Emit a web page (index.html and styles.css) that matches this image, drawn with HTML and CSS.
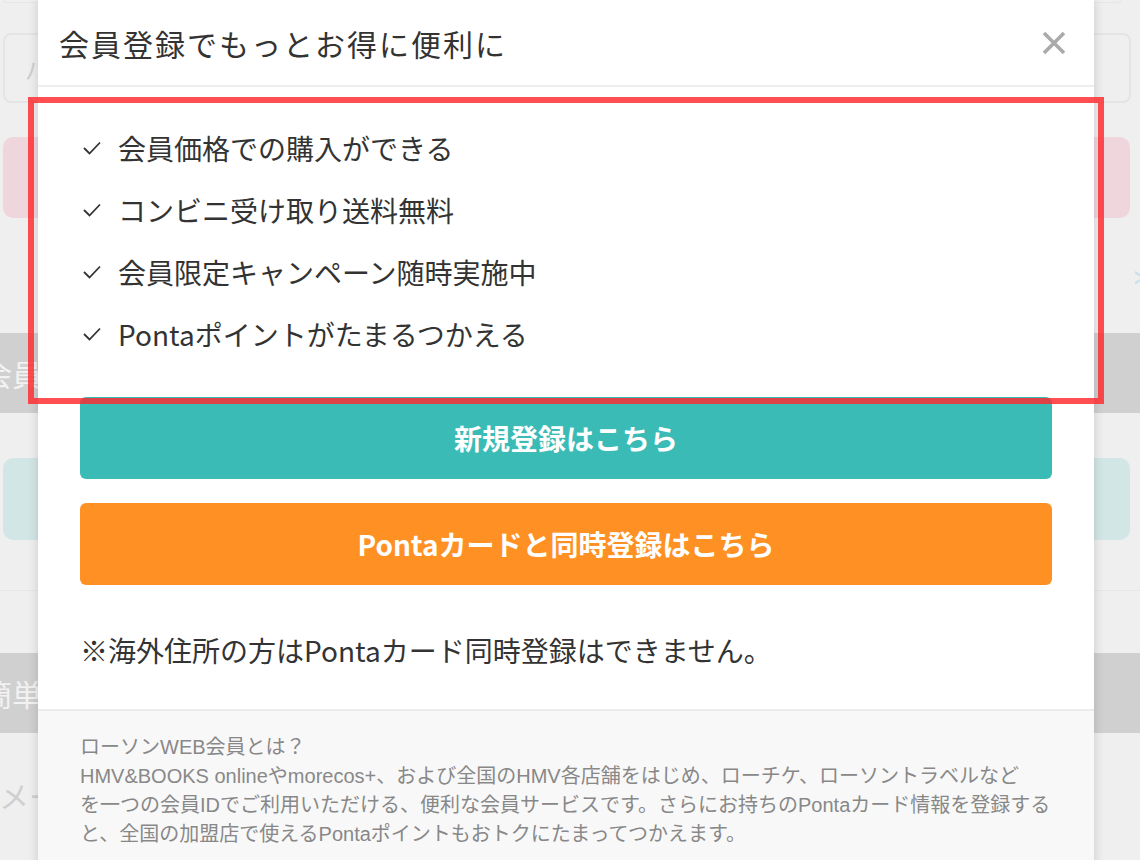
FILE: index.html
```html
<!DOCTYPE html>
<html lang="ja">
<head>
    <meta charset="UTF-8">
    <meta name="viewport" content="width=device-width, initial-scale=1.0">
    <title>会員登録</title>
    <link rel="stylesheet" href="styles.css">
</head>
<body>
    <div class="page">
        <div class="page-top"></div>
        <div class="field"><span class="placeholder">パスワード</span></div>
        <div class="alert-box"></div>
        <div class="link-row"><span class="chevron">&gt;</span></div>
        <div class="band">会員情報の入力</div>
        <div class="info-box"></div>
        <div class="divider"></div>
        <div class="band">簡単登録</div>
        <div class="label-row">メールアドレス</div>
    </div>

    <div class="modal">
        <div class="modal-header">
            <h2 class="modal-title">会員登録でもっとお得に便利に</h2>
            <button class="close-btn" aria-label="閉じる">
                <svg width="24" height="24" viewBox="0 0 24 24">
                    <path d="M2 2 L22 22 M22 2 L2 22" stroke="#aaa" stroke-width="3.6" fill="none"/>
                </svg>
            </button>
        </div>
        <div class="modal-body">
            <ul class="benefits">
                <li><svg class="check" width="18" height="14" viewBox="0 0 18 14"><path d="M1 7 L6.5 12.5 L17 1.5" stroke="#333" stroke-width="1.8" fill="none"/></svg>会員価格での購入ができる</li>
                <li><svg class="check" width="18" height="14" viewBox="0 0 18 14"><path d="M1 7 L6.5 12.5 L17 1.5" stroke="#333" stroke-width="1.8" fill="none"/></svg>コンビニ受け取り送料無料</li>
                <li><svg class="check" width="18" height="14" viewBox="0 0 18 14"><path d="M1 7 L6.5 12.5 L17 1.5" stroke="#333" stroke-width="1.8" fill="none"/></svg>会員限定キャンペーン随時実施中</li>
                <li><svg class="check" width="18" height="14" viewBox="0 0 18 14"><path d="M1 7 L6.5 12.5 L17 1.5" stroke="#333" stroke-width="1.8" fill="none"/></svg>Pontaポイントがたまるつかえる</li>
            </ul>
            <a href="#" class="btn btn-teal">新規登録はこちら</a>
            <a href="#" class="btn btn-orange">Pontaカードと同時登録はこちら</a>
            <p class="note">※海外住所の方はPontaカード同時登録はできません。</p>
        </div>
        <div class="modal-footer">
            <p>ローソンWEB会員とは？<br>HMV&amp;BOOKS onlineやmorecos+、および全国のHMV各店舗をはじめ、ローチケ、ローソントラベルなど<br>を一つの会員IDでご利用いただける、便利な会員サービスです。さらにお持ちのPontaカード情報を登録する<br>と、全国の加盟店で使えるPontaポイントもおトクにたまってつかえます。</p>
        </div>
    </div>

    <div class="highlight"></div>
</body>
</html>
```

FILE: styles.css
```css
body {
    font-family: "Noto Sans CJK JP", "Noto Sans", sans-serif;
    color: #333;
    margin: 0;
    padding: 0;
    background-color: #efefef;
    height: 860px;
    overflow: hidden;
    position: relative;
}
.page {
    padding: 0 9px 0 3px;
}
.page-top {
    height: 2px;
    margin: 0 10px 0 0;
    border: 1px solid #e6e6e6;
    border-top: none;
    border-radius: 0 0 8px 8px;
}
.field {
    margin-top: 30px;
    height: 66px;
    border: 2px solid #e4e4e4;
    border-radius: 8px;
    display: flex;
    align-items: center;
    padding-left: 20px;
}
.placeholder {
    color: #cfcfcf;
    font-size: 24px;
}
.alert-box {
    margin-top: 34px;
    height: 81px;
    background-color: #efd6dc;
    border-radius: 10px;
    margin-right: 1px;
}
.link-row {
    height: 115px;
    display: flex;
    align-items: center;
    justify-content: flex-end;
    margin-right: -9px;
}
.chevron {
    color: #c6e0ea;
    font-size: 30px;
    transform: scaleX(0.6);
    margin-right: -8px;
}
.band {
    margin: 0 -9px 0 -3px;
    height: 80px;
    background-color: #d0d0d0;
    color: #f2f2f2;
    font-size: 30px;
    line-height: 80px;
    text-indent: -18px;
}
.info-box {
    margin-top: 45px;
    height: 82px;
    background-color: #d3e6e6;
    border-radius: 10px;
    margin-right: 1px;
}
.divider {
    margin: 50px -9px 62px -3px;
    height: 1px;
    background-color: #e7e7e7;
}
.label-row {
    margin-top: 40px;
    color: #cfcfcf;
    font-size: 30px;
    text-indent: -4px;
}

.modal {
    position: absolute;
    left: 38px;
    top: 0;
    width: 1056px;
    background-color: #fff;
    box-shadow: 0 0 10px rgba(0, 0, 0, 0.16);
}
.modal-header {
    height: 85px;
    border-bottom: 2px solid #eee;
    display: flex;
    align-items: center;
    justify-content: space-between;
    padding: 0 28px 0 21px;
}
.modal-title {
    margin: 0;
    font-size: 30px;
    font-weight: normal;
    letter-spacing: 2px;
    color: #333;
}
.close-btn {
    border: none;
    background: none;
    padding: 0;
    width: 24px;
    height: 24px;
    cursor: pointer;
}
.close-btn svg {
    display: block;
}
.modal-body {
    padding: 30px 42px 41px;
}
.benefits {
    list-style: none;
    margin: 0;
    padding: 0;
}
.benefits li {
    height: 62px;
    display: flex;
    align-items: center;
    font-size: 28px;
    color: #333;
}
.benefits .check {
    margin: 0 17px 0 3px;
    flex-shrink: 0;
}
.btn {
    display: flex;
    align-items: center;
    justify-content: center;
    height: 82px;
    border-radius: 6px;
    color: #fff;
    font-weight: bold;
    font-size: 28px;
    text-decoration: none;
}
.btn-teal {
    margin-top: 32px;
    background-color: #3bbbb6;
}
.btn-orange {
    margin-top: 24px;
    background-color: #ff9124;
}
.note {
    margin: 47px 0 0;
    font-size: 28px;
    line-height: 36px;
    color: #333;
}
.modal-footer {
    background-color: #f8f8f8;
    border-top: 2px solid #ebebeb;
    padding: 22px 20px 30px 42px;
}
.modal-footer p {
    margin: 0;
    font-family: "Liberation Sans", "Noto Sans CJK JP", sans-serif;
    font-size: 20px;
    line-height: 29px;
    color: #888;
    white-space: nowrap;
}

.highlight {
    position: absolute;
    left: 28px;
    top: 97px;
    width: 1064px;
    height: 295px;
    border: 6px solid rgba(255, 40, 45, 0.82);
    pointer-events: none;
}
```
